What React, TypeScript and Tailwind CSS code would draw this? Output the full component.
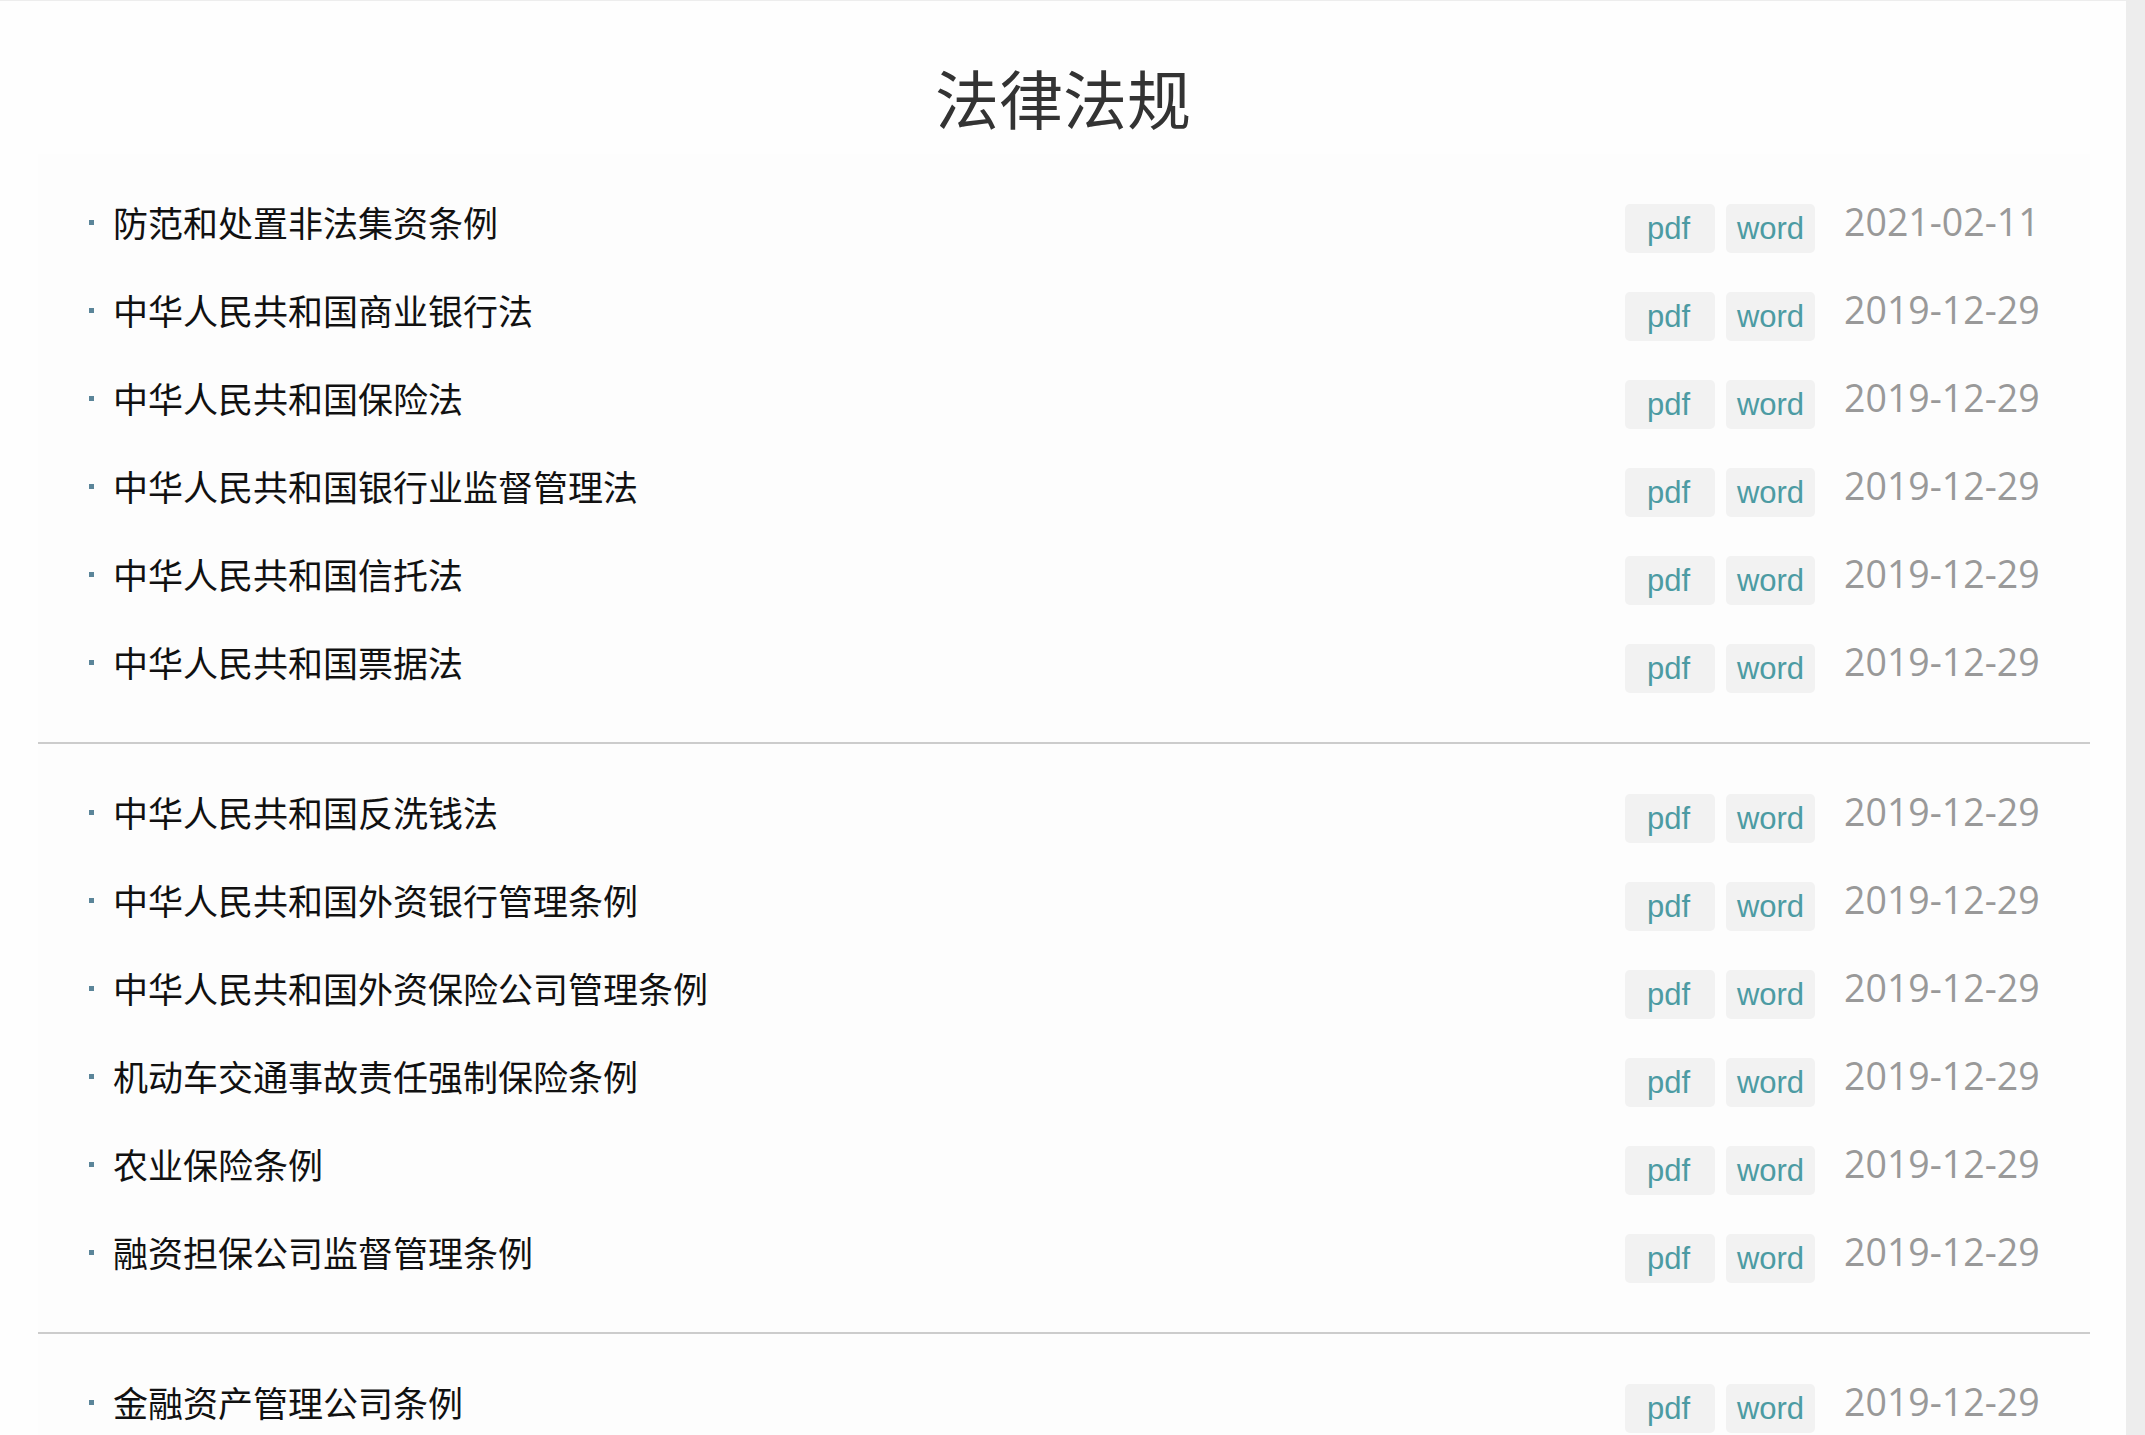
import React from "react";

type Item = { title: string; date: string };

const groups: Item[][] = [
  [
    { title: "防范和处置非法集资条例", date: "2021-02-11" },
    { title: "中华人民共和国商业银行法", date: "2019-12-29" },
    { title: "中华人民共和国保险法", date: "2019-12-29" },
    { title: "中华人民共和国银行业监督管理法", date: "2019-12-29" },
    { title: "中华人民共和国信托法", date: "2019-12-29" },
    { title: "中华人民共和国票据法", date: "2019-12-29" },
  ],
  [
    { title: "中华人民共和国反洗钱法", date: "2019-12-29" },
    { title: "中华人民共和国外资银行管理条例", date: "2019-12-29" },
    { title: "中华人民共和国外资保险公司管理条例", date: "2019-12-29" },
    { title: "机动车交通事故责任强制保险条例", date: "2019-12-29" },
    { title: "农业保险条例", date: "2019-12-29" },
    { title: "融资担保公司监督管理条例", date: "2019-12-29" },
  ],
  [{ title: "金融资产管理公司条例", date: "2019-12-29" }],
];

function Row({ item }: { item: Item }) {
  return (
    <div className="flex h-[88px] items-center pl-[51px] pr-[44px]">
      <span className="h-[5px] w-[5px] shrink-0 bg-[#5b8599]" />
      <span
        className="mb-[2px] ml-[19px] flex-1 text-[35px] leading-none text-[#111]"
        style={{ fontFamily: '"Noto Sans CJK SC", "Noto Sans", sans-serif' }}
      >
        {item.title}
      </span>
      <a
        href="#"
        className="mt-[13px] flex h-[49px] w-[90px] items-center justify-center rounded-[5px] bg-[#f2f2f2] pr-[3px] text-[31px] leading-none text-[#4c9ba3]"
        style={{ fontFamily: '"Liberation Sans", Arial, sans-serif' }}
      >
        pdf
      </a>
      <a
        href="#"
        className="ml-[11px] mt-[13px] flex h-[49px] w-[89px] items-center justify-center rounded-[5px] bg-[#f2f2f2] text-[31px] leading-none text-[#4c9ba3]"
        style={{ fontFamily: '"Liberation Sans", Arial, sans-serif' }}
      >
        word
      </a>
      <span
        className="ml-[29px] w-[202px] text-[37.5px] leading-none text-[#999]"
        style={{ fontFamily: '"Open Sans", "Noto Sans", sans-serif' }}
      >
        {item.date}
      </span>
    </div>
  );
}

export default function App() {
  return (
    <div className="min-h-screen bg-[#ededed] pt-px">
      <div className="min-h-[1434px] w-[2126px] bg-[#fefefe]">
        <h1
          className="pt-[63px] text-center text-[64px] font-normal leading-[64px] text-[#333]"
          style={{ fontFamily: '"Noto Sans CJK SC", "Noto Sans", sans-serif' }}
        >
          法律法规
        </h1>
        <div className="ml-[38px] mt-[26px] w-[2052px] bg-[#fdfdfd]">
          {groups.map((g, gi) => (
            <div
              key={gi}
              className={
                gi < groups.length - 1
                  ? "border-b-2 border-[#cccccc] pb-[36px] pt-[24px]"
                  : "pt-[24px]"
              }
            >
              {g.map((it, i) => (
                <Row key={i} item={it} />
              ))}
            </div>
          ))}
        </div>
      </div>
    </div>
  );
}
